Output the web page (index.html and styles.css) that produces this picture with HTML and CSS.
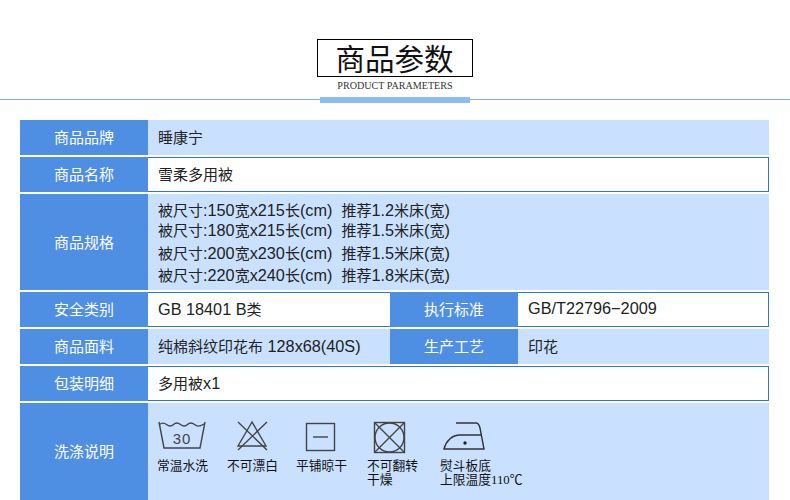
FILE: index.html
```html
<!DOCTYPE html>
<html lang="zh">
<head>
<meta charset="utf-8">
<title>商品参数</title>
<link rel="stylesheet" href="styles.css">
</head>
<body>
<header class="head">
  <h1 class="title">商品参数</h1>
  <p class="sub">PRODUCT PARAMETERS</p>
  <div class="rule"><span class="rule-bar"></span></div>
</header>
<main class="table">
  <div class="row tint h35"><div class="lab">商品品牌</div><div class="val">睡康宁</div></div>
  <div class="row line h35"><div class="lab">商品名称</div><div class="val">雪柔多用被</div></div>
  <div class="row tint h96"><div class="lab">商品规格</div>
    <div class="val specs">
      <div class="s1">被尺寸<b>:150</b>宽<b>x215</b>长<b>(cm)&nbsp; </b>推荐<b>1.2</b>米床<b>(</b>宽<b>)</b></div>
      <div class="s2">被尺寸<b>:180</b>宽<b>x215</b>长<b>(cm)&nbsp; </b>推荐<b>1.5</b>米床<b>(</b>宽<b>)</b></div>
      <div class="s3">被尺寸<b>:200</b>宽<b>x230</b>长<b>(cm)&nbsp; </b>推荐<b>1.5</b>米床<b>(</b>宽<b>)</b></div>
      <div class="s3">被尺寸<b>:220</b>宽<b>x240</b>长<b>(cm)&nbsp; </b>推荐<b>1.8</b>米床<b>(</b>宽<b>)</b></div>
    </div>
  </div>
  <div class="row line h35"><div class="lab">安全类别</div><div class="val half"><span><b>GB 18401 B</b>类</span></div><div class="lab">执行标准</div><div class="val"><b>GB/T22796−2009</b></div></div>
  <div class="row tint h35"><div class="lab">商品面料</div><div class="val half"><span>纯棉斜纹印花布<b> 128x68(40S)</b></span></div><div class="lab">生产工艺</div><div class="val">印花</div></div>
  <div class="row line h35"><div class="lab">包装明细</div><div class="val"><span>多用被<b>x1</b></span></div></div>
  <div class="row tint h97"><div class="lab">洗涤说明</div>
    <div class="care">
      <figure class="item w70">
        <svg width="50" height="32" viewBox="0 0 50 32"><g fill="none" stroke="#444" stroke-width="1.4"><path d="M2 1 L7 27 H43 L48 1"/><path d="M2.5 3.5 C5 1.5 7 1.5 9.5 3.5 S14 6 16.5 3.5 S21 1.5 23.5 3.5 S28 6 30.5 3.5 S35 1.5 37.5 3.5 S42 6 47 3"/></g><text x="25" y="22.5" class="wash">30</text></svg>
        <figcaption>常温水洗</figcaption>
      </figure>
      <figure class="item w69">
        <svg width="50" height="32" viewBox="0 0 50 32"><g fill="none" stroke="#444" stroke-width="1.4"><path d="M25 1 L11 25 H39 Z"/><path d="M11 1 L40 29 M40 1 L11 29"/></g></svg>
        <figcaption>不可漂白</figcaption>
      </figure>
      <figure class="item w71">
        <svg width="50" height="32" viewBox="0 0 50 32"><g fill="none" stroke="#444" stroke-width="1.4"><rect x="10.5" y="2.5" width="28" height="27"/><path d="M17 16 H32"/></g></svg>
        <figcaption>平铺晾干</figcaption>
      </figure>
      <figure class="item w73">
        <svg width="50" height="32" viewBox="0 0 50 32"><g fill="none" stroke="#444" stroke-width="1.4"><rect x="7.5" y="1.5" width="30" height="30"/><circle cx="22.5" cy="16.5" r="14.5"/><path d="M7.5 1.5 L37.5 31.5 M37.5 1.5 L7.5 31.5"/></g></svg>
        <figcaption>不可翻转<br>干燥</figcaption>
      </figure>
      <figure class="item">
        <svg width="50" height="32" viewBox="0 0 50 32"><g fill="none" stroke="#333" stroke-width="1.4"><path d="M16 2 H36 C38 2 39 3 40 7 L44 28 H4 C6 20 12 14 20 14 H42"/></g><circle cx="25" cy="22" r="1.7" fill="#222"/></svg>
        <figcaption>熨斗板底<br>上限温度<i>110</i>℃</figcaption>
      </figure>
    </div>
  </div>
</main>
</body>
</html>
```
FILE: styles.css
```css
* { box-sizing: border-box; }
html, body { margin: 0; padding: 0; }
body {
  width: 790px;
  height: 500px;
  overflow: hidden;
  background: #fff;
  color: #222;
  font-family: "Noto Sans CJK SC", sans-serif;
  font-size: 15px;
}
.head { display: flex; flex-direction: column; align-items: center; padding-top: 39px; height: 120px; }
.title {
  margin: 0;
  width: 156px;
  height: 38px;
  padding-right: 1px;
  border: 1px solid #000;
  font-size: 29.5px;
  font-weight: 400;
  line-height: 34px;
  text-align: center;
  color: #111;
}
.sub {
  margin: 3px 0 0;
  font-family: "Liberation Serif", serif;
  font-size: 10.1px;
  line-height: 12px;
  color: #333;
}
.rule { width: 100%; height: 1px; margin-top: 7px; background: #7cb0ea; display: flex; justify-content: center; }
.rule-bar { display: block; width: 150px; height: 6px; margin-top: -2px; background: #8dbcf5; }
.table { display: flex; flex-direction: column; gap: 2px; margin: 0 21px 0 20px; }
.row { display: flex; }
.h35 { height: 35px; }
.h96 { height: 96px; }
.h97 { height: 97px; }
.tint { background: #c9e1fe; }
.line { background: #fff; box-shadow: inset 0 0 0 1px #2a75e0; }
.lab {
  flex: 0 0 128px;
  display: flex;
  align-items: center;
  justify-content: center;
  padding-bottom: 2px;
  background: #4e8ee3;
  color: #fff;
  font-size: 15px;
}
.val {
  flex: 1;
  display: flex;
  align-items: center;
  padding: 0 0 2px 10px;
  font-size: 15px;
  color: #222;
}
.val b {
  font-family: "Liberation Sans", sans-serif;
  font-size: 16.25px;
  font-weight: 400;
}
.half { flex: 0 0 242px; }
.specs { flex-direction: column; align-items: flex-start; justify-content: flex-start; padding-top: 6px; }
.s1, .s2, .s3 { line-height: 20px; white-space: nowrap; }
.s1 { height: 20px; }
.s2 { height: 23px; }
.s3 { height: 22px; }
.care { flex: 1; display: flex; padding: 18px 0 0 9px; }
.item { margin: 0; display: flex; flex-direction: column; align-items: flex-start; }
.w70 { width: 70px; }
.w69 { width: 69px; }
.w71 { width: 71px; }
.w73 { width: 73px; }
.item figcaption {
  margin-top: 5px;
  font-size: 12.75px;
  line-height: 13.5px;
  color: #111;
}
.item figcaption i { font-family: "Liberation Serif", serif; font-style: normal; }
.item svg { display: block; overflow: visible; }
.wash { font-family: "Liberation Sans", sans-serif; font-size: 15px; letter-spacing: 1px; fill: #444; text-anchor: middle; }
```
